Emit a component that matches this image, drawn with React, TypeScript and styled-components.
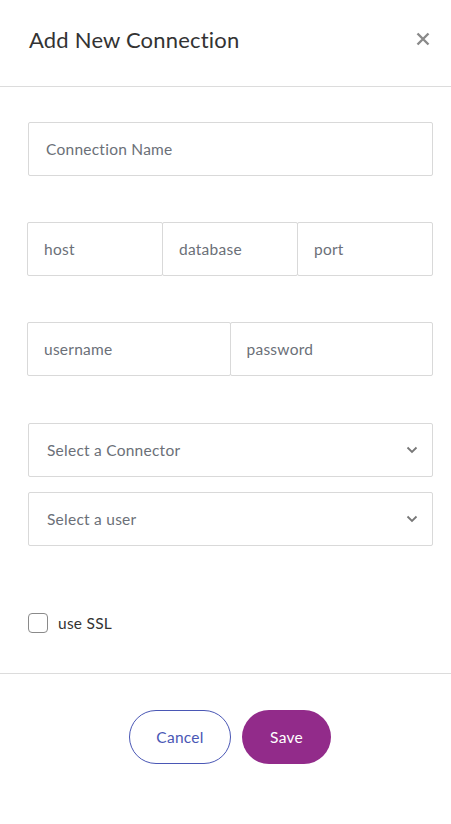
import React from "react";
import styled, { createGlobalStyle } from "styled-components";

const Global = createGlobalStyle`
  html, body { margin: 0; padding: 0; background: #fff; }
  body { font-family: Lato, "Open Sans", sans-serif; }
  * { box-sizing: border-box; }
`;

const Modal = styled.div`
  width: 451px;
  min-height: 824px;
  background: #fff;
  display: flex;
  flex-direction: column;
`;

const Header = styled.div`
  height: 87px;
  padding: 0 19px 8px 29px;
  display: flex;
  align-items: center;
  justify-content: space-between;
  border-bottom: 1px solid #dcdcdc;
`;

const Title = styled.h2`
  margin: 0;
  font-size: 22px;
  font-weight: 400;
  color: #333;
  letter-spacing: 0.2px;
`;

const Close = styled.button`
  border: none;
  background: none;
  padding: 0;
  width: 18px;
  height: 18px;
  display: flex;
  align-items: center;
  justify-content: center;
  cursor: pointer;
`;

const Body = styled.div`
  padding: 35px 18px 40px 27px;
  display: flex;
  flex-direction: column;
  border-bottom: 1px solid #dcdcdc;
`;

const Group = styled.div<{ $mb: number }>`
  display: flex;
  margin-bottom: ${(p) => p.$mb}px;
`;

const Field = styled.input<{ $indent?: number }>`
  flex: 1 1 0;
  min-width: 0;
  height: 54px;
  border: 1px solid #d9d9d9;
  border-radius: 2px;
  padding: 0 0 0 ${(p) => p.$indent ?? 17}px;
  font-family: Lato, "Open Sans", sans-serif;
  font-size: 15.5px;
  letter-spacing: 0.25px;
  color: #333;
  outline: none;
  & + & { margin-left: -1px; }
  &::placeholder { color: #6b7078; }
`;

const SelectBox = styled.div<{ $mb: number }>`
  height: 54px;
  border: 1px solid #d9d9d9;
  border-radius: 2px;
  margin-left: 1px;
  margin-bottom: ${(p) => p.$mb}px;
  padding: 0 14px 0 18px;
  display: flex;
  align-items: center;
  justify-content: space-between;
  font-size: 15.5px;
  letter-spacing: 0.25px;
  color: #6b7078;
`;

const CheckRow = styled.label`
  display: flex;
  align-items: center;
  gap: 10px;
  margin-left: 1px;
  font-size: 15.5px;
  letter-spacing: 0.25px;
  color: #333;
`;

const Box = styled.span`
  width: 20px;
  height: 20px;
  border: 1.5px solid #8a8a8a;
  border-radius: 4px;
  background: #fff;
`;

const Footer = styled.div`
  display: flex;
  justify-content: center;
  gap: 11px;
  padding: 36px 0 0 9px;
`;

const Btn = styled.button<{ $primary?: boolean }>`
  height: 54px;
  border-radius: 27px;
  font-family: Lato, "Open Sans", sans-serif;
  font-size: 15.5px;
  letter-spacing: 0.25px;
  cursor: pointer;
  ${(p) =>
    p.$primary
      ? `width: 89px; background: #922b8a; border: none; color: #fff;`
      : `width: 102px; background: #fff; border: 1.5px solid #4a57b5; color: #4a57b5;`}
`;

const Chevron = () => (
  <svg width="12" height="8" viewBox="0 0 12 8">
    <path d="M1.5 1.5 L6 6 L10.5 1.5" fill="none" stroke="#777" strokeWidth="1.8" />
  </svg>
);

export default function App() {
  return (
    <>
      <Global />
      <Modal>
        <Header>
          <Title>Add New Connection</Title>
          <Close aria-label="close">
            <svg width="14" height="14" viewBox="0 0 14 14">
              <path d="M1.5 1.5 L12.5 12.5 M12.5 1.5 L1.5 12.5" stroke="#8a8a8a" strokeWidth="2.4" />
            </svg>
          </Close>
        </Header>
        <Body>
          <Group $mb={46} style={{ marginLeft: 1 }}>
            <Field placeholder="Connection Name" />
          </Group>
          <Group $mb={46}>
            <Field $indent={16} placeholder="host" />
            <Field $indent={16} placeholder="database" />
            <Field $indent={16} placeholder="port" />
          </Group>
          <Group $mb={47}>
            <Field $indent={16} placeholder="username" />
            <Field $indent={16} placeholder="password" />
          </Group>
          <SelectBox $mb={15}>
            Select a Connector
            <Chevron />
          </SelectBox>
          <SelectBox $mb={67}>
            Select a user
            <Chevron />
          </SelectBox>
          <CheckRow>
            <Box />
            use SSL
          </CheckRow>
        </Body>
        <Footer>
          <Btn>Cancel</Btn>
          <Btn $primary>Save</Btn>
        </Footer>
      </Modal>
    </>
  );
}
